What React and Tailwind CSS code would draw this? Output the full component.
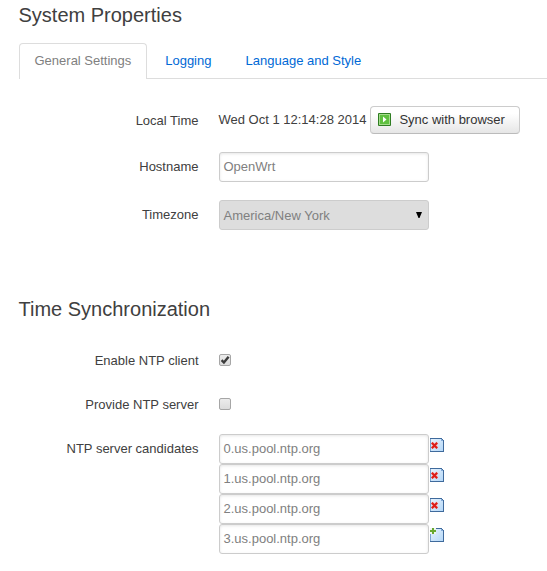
import React from "react";

const inputClass =
  "flex h-[30px] w-[210px] items-center rounded-[3px] border border-[#ccc] bg-white pl-[3.5px] pb-px text-[13px] text-[#808080] shadow-[inset_0_1px_3px_rgba(0,0,0,0.1)]";

function Row({ label, height, children }) {
  return (
    <div className={"flex items-start " + height}>
      <div className="w-[198.5px] shrink-0 pt-[6px] text-right leading-[18px]">{label}</div>
      <div className="ml-[20.5px] flex">{children}</div>
    </div>
  );
}

function PageIcon({ kind }) {
  return (
    <svg className="ml-px mt-1 block" width="14" height="14" viewBox="0 0 14 14">
      <defs>
        <linearGradient id={"page-" + kind} x1="0" y1="0" x2="1" y2="1">
          <stop offset="0" stopColor="#e6f2fd" />
          <stop offset="1" stopColor="#b5d8f8" />
        </linearGradient>
      </defs>
      <path d="M0 0H12V1H13V2H14V14H0Z" fill="#3f6a9c" />
      <path d="M0 1H1V13H0Z" fill="#7ba3d0" />
      <path d="M1 1H11V3H13V13H1Z" fill={"url(#page-" + kind + ")"} />
      <path d="M11 1H12V2H13V3H11Z" fill="#82abd9" />
      {kind === "remove" ? (
        <>
          <path d="M1.8 4.6L7.4 10.2M7.4 4.6L1.8 10.2" fill="none" stroke="#f3c4c8" strokeWidth="3.2" />
          <path d="M1.8 4.8L7.2 10.2M7.2 4.8L1.8 10.2" fill="none" stroke="#dc1c18" strokeWidth="2.1" />
        </>
      ) : (
        <>
          <path d="M0 0H6V6H0Z" fill="#eef6ee" />
          <path d="M2 0H4V2H6V4H4V6H2V4H0V2H2Z" fill="#68a830" />
        </>
      )}
    </svg>
  );
}

function Checkbox({ checked }) {
  return (
    <div className="mt-2 h-[12px] w-[12px] rounded-[2px] border border-[#a6a6a6] bg-linear-to-b from-[#ececec] to-[#dcdcdc]">
      {checked && (
        <svg className="block" width="10" height="10" viewBox="0 0 10 10">
          <path d="M1.6 5.2L3.9 7.5L8.6 1.8" fill="none" stroke="#3c3c3c" strokeWidth="2.4" />
        </svg>
      )}
    </div>
  );
}

const servers = ["0.us.pool.ntp.org", "1.us.pool.ntp.org", "2.us.pool.ntp.org", "3.us.pool.ntp.org"];

export default function App() {
  return (
    <div className="h-[571px] w-[547px] overflow-hidden bg-white font-['Liberation_Sans',Arial,sans-serif] text-[13px] leading-[18px] text-[#404040]">
      <h3 className="ml-[18.5px] h-[43px] pt-[5px] text-[20px] leading-[20px]">System Properties</h3>
      <div className="ml-[19px] flex h-9 border-b border-[#ddd] leading-[34px]">
        <div className="h-9 w-[128px] rounded-t-[4px] border border-b-0 border-[#ddd] bg-white pl-[14.5px] text-[#808080]">
          General Settings
        </div>
        <div className="ml-[18.2px] pt-px text-[#0069d6]">Logging</div>
        <div className="ml-[34.1px] pt-px text-[#0069d6]">Language and Style</div>
      </div>

      <div className="pt-[27px]">
        <Row label="Local Time" height="h-[46px]">
          <div className="-ml-[0.5px] flex">
            <span className="w-[151.5px] whitespace-nowrap pt-[5px]">Wed Oct 1 12:14:28 2014</span>
            <button className="flex h-7 w-[150px] items-start rounded-[4px] border border-[#ccc] border-b-[#bbb] bg-linear-to-b from-white from-25% to-[#e6e6e6] pl-[7px] text-[#333]">
              <svg className="mt-[6px]" width="13" height="13" viewBox="0 0 13 13">
                <rect width="13" height="13" rx="1" fill="#2f7d22" />
                <rect x="1" y="1" width="11" height="11" fill="#a5dc8c" />
                <rect x="2" y="2" width="9" height="9" fill="#5fc03f" />
                <path d="M5 3.5L8.5 6.5L5 9.5Z" fill="#fff" />
              </svg>
              <span className="ml-[8.4px] mt-1 leading-[18px]">Sync with browser</span>
            </button>
          </div>
        </Row>
        <Row label="Hostname" height="h-12">
          <div className={inputClass}>OpenWrt</div>
        </Row>
        <Row label="Timezone" height="h-[98px]">
          <div className="flex h-[30px] w-[210px] items-center justify-between rounded-[3px] border border-[#ccc] bg-[#ddd] pl-[3.5px] pr-[6px] text-[#808080]">
            <span className="pt-px">America/New York</span>
            <svg width="6" height="6" viewBox="0 0 6 6">
              <path d="M0 0H6L3.5 6H2.5Z" fill="#000" />
            </svg>
          </div>
        </Row>
      </div>

      <h3 className="ml-[18.5px] h-12 pt-px text-[20px] leading-[20px]">Time Synchronization</h3>
      <Row label="Enable NTP client" height="h-11">
        <Checkbox checked />
      </Row>
      <Row label="Provide NTP server" height="h-11">
        <Checkbox />
      </Row>
      <Row label="NTP server candidates" height="h-[120px]">
        <div className="flex flex-col">
          {servers.map((server, index) => (
            <div key={server} className="flex">
              <div className={inputClass}>{server}</div>
              <PageIcon kind={index < 3 ? "remove" : "add"} />
            </div>
          ))}
        </div>
      </Row>
    </div>
  );
}
